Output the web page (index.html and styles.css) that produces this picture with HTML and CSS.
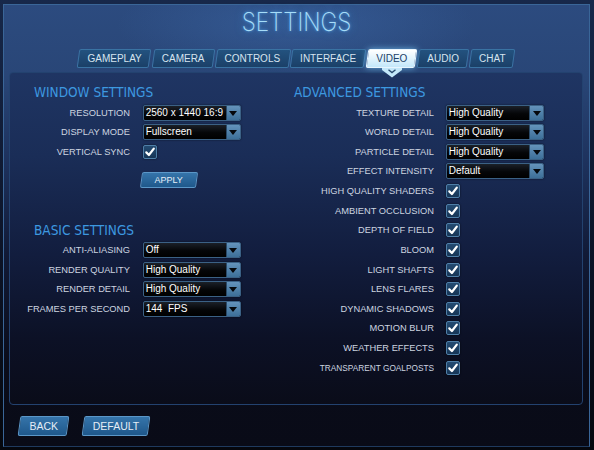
FILE: index.html
```html
<!DOCTYPE html>
<html lang="en">
<head>
<meta charset="utf-8">
<title>Settings</title>
<link rel="stylesheet" href="styles.css">
</head>
<body>
<div class="frame">
  <h1 class="title">SETTINGS</h1>
  <nav class="tabs">
    <span class="tab">GAMEPLAY</span>
    <span class="tab">CAMERA</span>
    <span class="tab">CONTROLS</span>
    <span class="tab">INTERFACE</span>
    <span class="tab active">VIDEO<svg class="pointer" width="20" height="10" viewBox="0 0 20 10"><path d="M0 0H20V2L10 9.5L0 2Z" fill="#c4e8fa"/><path d="M6.5 1.8L10 4.6L13.5 1.8" fill="none" stroke="#27496d" stroke-width="1.3"/></svg></span>
    <span class="tab">AUDIO</span>
    <span class="tab">CHAT</span>
  </nav>
  <section class="panel">
    <div class="col col-left">
      <h2 class="heading">WINDOW SETTINGS</h2>
      <div class="rows rows-left">
        <span class="label">RESOLUTION</span>
        <div class="select"><span class="value">2560 x 1440 16:9</span><span class="arrow"></span></div>
        <span class="label">DISPLAY MODE</span>
        <div class="select"><span class="value">Fullscreen</span><span class="arrow"></span></div>
        <span class="label">VERTICAL SYNC</span>
        <span class="check"><svg width="12" height="12" viewBox="0 0 12 12"><path d="M2.3 6.4L4.9 9L9.8 2.6" fill="none" stroke="#fff" stroke-width="2.2" stroke-linecap="round" stroke-linejoin="round"/></svg></span>
      </div>
      <button class="btn apply">APPLY</button>
      <h2 class="heading basic">BASIC SETTINGS</h2>
      <div class="rows rows-left">
        <span class="label">ANTI-ALIASING</span>
        <div class="select"><span class="value">Off</span><span class="arrow"></span></div>
        <span class="label">RENDER QUALITY</span>
        <div class="select"><span class="value">High Quality</span><span class="arrow"></span></div>
        <span class="label">RENDER DETAIL</span>
        <div class="select"><span class="value">High Quality</span><span class="arrow"></span></div>
        <span class="label">FRAMES PER SECOND</span>
        <div class="select"><span class="value">144&nbsp; FPS</span><span class="arrow"></span></div>
      </div>
    </div>
    <div class="col col-right">
      <h2 class="heading">ADVANCED SETTINGS</h2>
      <div class="rows rows-right">
        <span class="label">TEXTURE DETAIL</span>
        <div class="select"><span class="value">High Quality</span><span class="arrow"></span></div>
        <span class="label">WORLD DETAIL</span>
        <div class="select"><span class="value">High Quality</span><span class="arrow"></span></div>
        <span class="label">PARTICLE DETAIL</span>
        <div class="select"><span class="value">High Quality</span><span class="arrow"></span></div>
        <span class="label">EFFECT INTENSITY</span>
        <div class="select"><span class="value">Default</span><span class="arrow"></span></div>
        <span class="label">HIGH QUALITY SHADERS</span>
        <span class="check"><svg width="12" height="12" viewBox="0 0 12 12"><path d="M2.3 6.4L4.9 9L9.8 2.6" fill="none" stroke="#fff" stroke-width="2.2" stroke-linecap="round" stroke-linejoin="round"/></svg></span>
        <span class="label">AMBIENT OCCLUSION</span>
        <span class="check"><svg width="12" height="12" viewBox="0 0 12 12"><path d="M2.3 6.4L4.9 9L9.8 2.6" fill="none" stroke="#fff" stroke-width="2.2" stroke-linecap="round" stroke-linejoin="round"/></svg></span>
        <span class="label">DEPTH OF FIELD</span>
        <span class="check"><svg width="12" height="12" viewBox="0 0 12 12"><path d="M2.3 6.4L4.9 9L9.8 2.6" fill="none" stroke="#fff" stroke-width="2.2" stroke-linecap="round" stroke-linejoin="round"/></svg></span>
        <span class="label">BLOOM</span>
        <span class="check"><svg width="12" height="12" viewBox="0 0 12 12"><path d="M2.3 6.4L4.9 9L9.8 2.6" fill="none" stroke="#fff" stroke-width="2.2" stroke-linecap="round" stroke-linejoin="round"/></svg></span>
        <span class="label">LIGHT SHAFTS</span>
        <span class="check"><svg width="12" height="12" viewBox="0 0 12 12"><path d="M2.3 6.4L4.9 9L9.8 2.6" fill="none" stroke="#fff" stroke-width="2.2" stroke-linecap="round" stroke-linejoin="round"/></svg></span>
        <span class="label">LENS FLARES</span>
        <span class="check"><svg width="12" height="12" viewBox="0 0 12 12"><path d="M2.3 6.4L4.9 9L9.8 2.6" fill="none" stroke="#fff" stroke-width="2.2" stroke-linecap="round" stroke-linejoin="round"/></svg></span>
        <span class="label">DYNAMIC SHADOWS</span>
        <span class="check"><svg width="12" height="12" viewBox="0 0 12 12"><path d="M2.3 6.4L4.9 9L9.8 2.6" fill="none" stroke="#fff" stroke-width="2.2" stroke-linecap="round" stroke-linejoin="round"/></svg></span>
        <span class="label">MOTION BLUR</span>
        <span class="check"><svg width="12" height="12" viewBox="0 0 12 12"><path d="M2.3 6.4L4.9 9L9.8 2.6" fill="none" stroke="#fff" stroke-width="2.2" stroke-linecap="round" stroke-linejoin="round"/></svg></span>
        <span class="label">WEATHER EFFECTS</span>
        <span class="check"><svg width="12" height="12" viewBox="0 0 12 12"><path d="M2.3 6.4L4.9 9L9.8 2.6" fill="none" stroke="#fff" stroke-width="2.2" stroke-linecap="round" stroke-linejoin="round"/></svg></span>
        <span class="label squeeze">TRANSPARENT GOALPOSTS</span>
        <span class="check"><svg width="12" height="12" viewBox="0 0 12 12"><path d="M2.3 6.4L4.9 9L9.8 2.6" fill="none" stroke="#fff" stroke-width="2.2" stroke-linecap="round" stroke-linejoin="round"/></svg></span>
      </div>
    </div>
  </section>
  <div class="footer">
    <button class="btn big">BACK</button>
    <button class="btn big">DEFAULT</button>
  </div>
</div>
</body>
</html>
```
FILE: styles.css
```css
* { box-sizing: border-box; }
html, body { margin: 0; padding: 0; }
body {
  width: 594px;
  height: 450px;
  overflow: hidden;
  background: linear-gradient(#17284a, #0b1224 60%, #05070d);
  font-family: "Liberation Sans", Arial, sans-serif;
}
.frame {
  margin: 4px 4px 3px 3px;
  height: 443px;
  border: 1px solid #3a6698;
  border-bottom-color: #1f3a5e;
  background:
    radial-gradient(ellipse 180px 50px at 50% 20px, rgba(70,120,190,0.35), transparent),
    linear-gradient(#2c4b7f 0px, #294677 70px, #1d315c 160px, #111a36 250px, #0a0c1a 360px, #090b17 100%);
  display: flex;
  flex-direction: column;
}
.title {
  margin: 1.5px 0 0;
  height: 30px;
  line-height: 30px;
  text-align: center;
  font-family: Inter, "DejaVu Sans", sans-serif;
  font-weight: 200;
  font-size: 26px;
  letter-spacing: 0;
  color: #a6dcf8;
  text-shadow: 0 0 3px rgba(90,180,245,0.9), 0 0 9px rgba(60,150,230,0.7);
  transform: scaleX(0.87);
}
.tabs {
  margin-top: 12.5px;
  display: flex;
  justify-content: center;
  gap: 2px;
  height: 19px;
  position: relative;
  z-index: 2;
}
.tab {
  position: relative;
  z-index: 0;
  height: 19px;
  line-height: 19px;
  padding: 0 9px;
  font-size: 10px;
  color: #d6e4ef;
}
.tab::before {
  content: "";
  position: absolute;
  inset: 0;
  z-index: -1;
  transform: skewX(-8deg);
  border: 1px solid #3a73a3;
  border-radius: 2px;
  background: linear-gradient(#23527f, #1b4068);
}
.tab.active { color: #1d4168; }
.tab.active::before {
  background: linear-gradient(#ffffff, #c4e8fa);
  border-color: #e8f6ff;
  box-shadow: 0 0 6px rgba(120,200,245,0.8);
}
.pointer {
  position: absolute;
  left: 50%;
  top: 18.5px;
  margin-left: -10px;
}
.panel {
  margin: 4px 6px 0 5px;
  height: 333px;
  border: 1px solid #23426f;
  border-radius: 4px;
  background: linear-gradient(#1f3563 0%, #1a2d57 25%, #121d3e 55%, #0c1126 80%, #0a0c19 100%);
  padding: 11px 0 0 14px;
  display: flex;
}
.col-left { width: 270px; }
.col-right { flex: 1; }
.heading {
  margin: 0 0 3.5px 10px;
  height: 17px;
  line-height: 17px;
  font-family: "DejaVu Sans Condensed", "DejaVu Sans", sans-serif;
  font-stretch: condensed;
  font-weight: normal;
  font-size: 13.5px;
  color: #3d99e0;
  white-space: nowrap;
}
.col-right .heading { margin-left: 0; }
.heading.basic { margin-top: 33.4px; }
.rows {
  display: grid;
  grid-auto-rows: 16px;
  row-gap: 3.63px;
  align-items: center;
}
.rows-left { grid-template-columns: 106px 98px; column-gap: 12.7px; }
.rows-right { grid-template-columns: 140px 98.6px; column-gap: 11.7px; }
.label {
  text-align: right;
  white-space: nowrap;
  font-size: 9.3px;
  color: #cdd5e0;
}
.squeeze { transform: scaleX(0.89); transform-origin: right center; }
.select {
  height: 16px;
  display: flex;
  border: 1px solid #3b6185;
  border-radius: 2px;
  background: linear-gradient(#1b2028, #050608 55%, #000);
  box-shadow: 0 0 2px rgba(0,0,0,0.6);
  overflow: hidden;
}
.value {
  flex: 1;
  padding-left: 2px;
  font-size: 10px;
  line-height: 14px;
  color: #ffffff;
  white-space: nowrap;
}
.arrow {
  width: 14px;
  display: flex;
  align-items: center;
  justify-content: center;
  background: linear-gradient(#6493bb, #3d6f98);
  border-left: 1px solid #2a4a68;
}
.arrow::after {
  content: "";
  border-left: 4px solid transparent;
  border-right: 4px solid transparent;
  border-top: 5px solid #05080c;
  margin-top: 1px;
}
.check {
  width: 14px;
  height: 14px;
  display: flex;
  align-items: center;
  justify-content: center;
  border: 1px solid #4f7fa8;
  border-radius: 2px;
  background: linear-gradient(#244b72, #163556);
  box-shadow: 0 0 2px rgba(0,0,0,0.7);
}
.btn {
  position: relative;
  z-index: 0;
  border: 0;
  padding: 0 10px;
  background: none;
  font-family: "Liberation Sans", Arial, sans-serif;
  color: #e4edf6;
  cursor: pointer;
  display: block;
}
.btn::before {
  content: "";
  position: absolute;
  inset: 0;
  z-index: -1;
  transform: skewX(-8deg);
  border: 1px solid #5b97c8;
  border-radius: 2px;
  background: linear-gradient(#3574aa, #1f588b);
}
.apply {
  margin-top: 12.3px;
  margin-left: 116.7px;
  width: 56px;
  height: 16.3px;
  padding: 0;
  font-size: 9px;
}
.footer {
  margin-top: 10.5px;
  padding-left: 15.4px;
  display: flex;
  gap: 14.8px;
}
.btn.big {
  height: 20px;
  font-size: 10.5px;
}
```
